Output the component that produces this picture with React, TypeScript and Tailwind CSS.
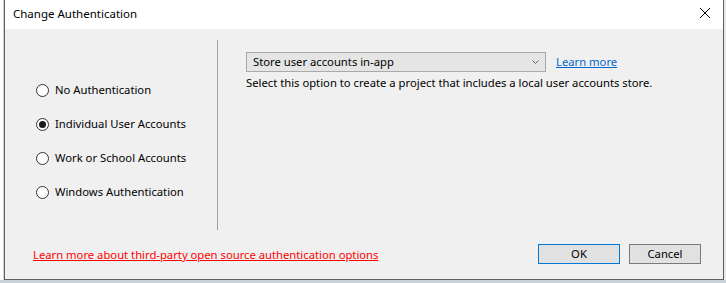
import React from "react";

const font = { fontFamily: '"Noto Sans", "Open Sans", sans-serif' };

function Radio({ label, checked }: { label: string; checked?: boolean }) {
  return (
    <div className="flex items-center h-[14px]">
      <div className="w-[13px] h-[13px] rounded-full border border-[#333333] bg-white flex items-center justify-center shrink-0">
        {checked && <div className="w-[7px] h-[7px] rounded-full bg-[#1a1a1a]" />}
      </div>
      <span className="ml-[6px] text-[11.25px] leading-[14px] text-black whitespace-nowrap">{label}</span>
    </div>
  );
}

export default function App() {
  return (
    <div className="w-[726px] h-[283px] overflow-hidden flex flex-col bg-[#c9d1d9]" style={font}>
      <div className="flex h-[280px]">
        <div className="w-[4px] bg-white border-r border-[#d0d0d0]" />
        <div className="w-[720px] flex flex-col border-l border-r border-b border-[#5f5f5f]">
          <div className="h-[29px] bg-white flex items-center justify-between pl-[8px] pr-[8px]">
            <span className="text-[11.5px] text-black -mt-[2px]">Change Authentication</span>
            <svg width="12" height="12" viewBox="0 0 12 12" className="mr-[4px] -mt-[3px]">
              <path d="M1 1 L11 11 M11 1 L1 11" stroke="#000" strokeWidth="1" fill="none" />
            </svg>
          </div>
          <div className="flex-1 bg-[#f0f0f0] flex flex-col">
            <div className="flex h-[201px] pt-[11px]">
              <div className="w-[213px] flex flex-col gap-[20px] pl-[31px] pt-[43px] border-r border-[#a0a0a0]">
                <Radio label="No Authentication" />
                <Radio label="Individual User Accounts" checked />
                <Radio label="Work or School Accounts" />
                <Radio label="Windows Authentication" />
              </div>
              <div className="flex flex-col pl-[28px] pt-[12px]">
                <div className="flex items-center">
                  <div className="w-[300px] h-[20px] border border-[#a9a9a9] bg-[#e5e5e5] flex items-center justify-between pl-[6px] pr-[6px]">
                    <span className="text-[11.25px] text-black">Store user accounts in-app</span>
                    <svg width="7" height="5" viewBox="0 0 7 5">
                      <path d="M0.5 0.5 L3.5 3.5 L6.5 0.5" stroke="#606060" strokeWidth="1" fill="none" />
                    </svg>
                  </div>
                  <span className="ml-[10px] text-[11.25px] text-[#0066cc] underline">Learn more</span>
                </div>
                <div className="text-[11.25px] text-black mt-[3px]">
                  Select this option to create a project that includes a local user accounts store.
                </div>
              </div>
            </div>
            <div className="flex items-center justify-between pl-[28px] pr-[22px] mt-[14px]">
              <span className="text-[11.25px] text-[#ff0000] underline mt-[3px]">
                Learn more about third-party open source authentication options
              </span>
              <div className="flex gap-[9px]">
                <button className="w-[82px] h-[20px] bg-[#e1e1e1] border border-[#0078d7] text-[11.25px] text-black flex items-center justify-center">
                  OK
                </button>
                <button className="w-[72px] h-[20px] bg-[#e1e1e1] border border-[#7a7a7a] text-[11.25px] text-black flex items-center justify-center">
                  Cancel
                </button>
              </div>
            </div>
          </div>
        </div>
        <div className="w-[2px] bg-[#e8e8e8]" />
      </div>
      <div className="h-[3px] bg-[#c9d1d9]" />
    </div>
  );
}
